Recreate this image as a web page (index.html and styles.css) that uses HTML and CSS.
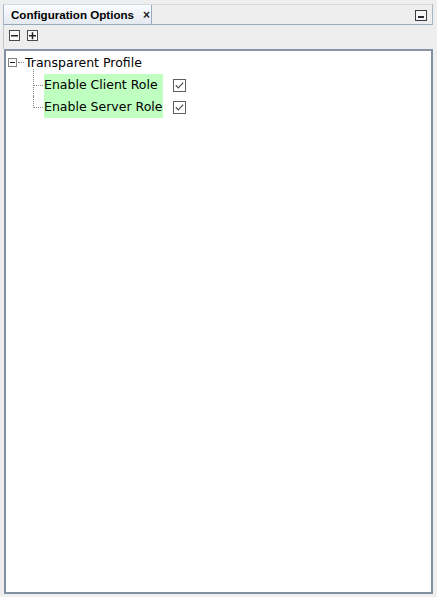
FILE: index.html
```html
<!DOCTYPE html>
<html>
<head>
<meta charset="utf-8">
<link rel="stylesheet" href="styles.css">
</head>
<body>
<div class="panel">
  <div class="header">
    <div class="tab">
      <span class="tab-title">Configuration Options</span>
      <span class="tab-close">×</span>
    </div>
    <span class="minimize"><span class="minimize-bar"></span></span>
  </div>
  <div class="toolbar">
    <span class="tool-btn">
      <svg width="11" height="11" viewBox="0 0 11 11"><rect x="0.5" y="0.5" width="10" height="10" fill="#fafafa" stroke="#4a4a4a"/><rect x="2" y="5" width="7" height="1.5" fill="#222"/></svg>
    </span>
    <span class="tool-btn">
      <svg width="11" height="11" viewBox="0 0 11 11"><rect x="0.5" y="0.5" width="10" height="10" fill="#fafafa" stroke="#4a4a4a"/><rect x="2" y="5" width="7" height="1.5" fill="#222"/><rect x="4.75" y="2.25" width="1.5" height="7" fill="#222"/></svg>
    </span>
  </div>
  <div class="content">
    <div class="root-row">
      <span class="expander">
        <svg width="9" height="9" viewBox="0 0 9 9"><rect x="0.5" y="0.5" width="8" height="8" fill="#fff" stroke="#808080"/><rect x="2" y="4" width="5" height="1" fill="#222"/></svg>
      </span>
      <span class="root-link"></span>
      <span class="root-label">Transparent Profile</span>
    </div>
    <div class="children">
      <div class="child">
        <span class="conn"></span>
        <span class="label">Enable Client Role</span>
        <span class="check">
          <svg width="13" height="13" viewBox="0 0 13 13"><rect x="0.5" y="0.5" width="12" height="12" fill="#fff" stroke="#5e5e5e"/><path d="M2.8 6.3 L5.3 8.9 L10.2 3.6" fill="none" stroke="#555" stroke-width="1.3"/></svg>
        </span>
      </div>
      <div class="child">
        <span class="conn"></span>
        <span class="label">Enable Server Role</span>
        <span class="check">
          <svg width="13" height="13" viewBox="0 0 13 13"><rect x="0.5" y="0.5" width="12" height="12" fill="#fff" stroke="#5e5e5e"/><path d="M2.8 6.3 L5.3 8.9 L10.2 3.6" fill="none" stroke="#555" stroke-width="1.3"/></svg>
        </span>
      </div>
    </div>
  </div>
</div>
</body>
</html>
```
FILE: styles.css
```css
html, body {
  margin: 0;
  padding: 0;
  background: #eeeeee;
}
body {
  width: 437px;
  height: 597px;
  overflow: hidden;
}
.panel {
  margin: 4px 0 0 3px;
  width: 430px;
  height: 590px;
  display: flex;
  flex-direction: column;
}
.header {
  height: 19px;
  display: flex;
  justify-content: space-between;
  align-items: stretch;
  border-top: 1px solid #d4dae2;
  border-right: 1px solid #a9b4c2;
  border-left: 1px solid #a9b4c2;
  border-bottom: 1px solid #98aac0;
  background: #eeeeee;
  box-sizing: content-box;
}
.tab {
  width: 148px;
  display: flex;
  align-items: center;
  border-right: 1px solid #9aaac0;
  background: linear-gradient(#fbfcfe, #e4e9f1);
  font-family: "Liberation Sans", Arial, sans-serif;
  font-weight: bold;
  font-size: 11.6px;
  color: #000;
  padding-left: 7px;
  box-sizing: border-box;
}
.tab-close {
  margin-left: 9px;
  font-size: 12px;
  color: #222;
}
.minimize {
  width: 8px;
  height: 7px;
  border: 1px solid #3a3a44;
  background: #f4f4f4;
  margin: 5px 5px 0 0;
  display: flex;
  align-items: flex-end;
  justify-content: center;
  padding: 1px;
}
.minimize-bar {
  width: 6px;
  height: 2px;
  background: #2a2a33;
  margin-bottom: 1px;
}
.toolbar {
  height: 24px;
  display: flex;
  align-items: flex-start;
  gap: 7px;
  padding: 5px 0 0 5px;
  box-sizing: border-box;
  border-left: 1px solid #c0c8d2;
}
.tool-btn {
  display: block;
  width: 11px;
  height: 11px;
}
.tool-btn svg {
  display: block;
}
.content {
  flex: 1;
  margin-left: 1px;
  border: 2px solid #8290a2;
  border-top-color: #8a96a6;
  background: #ffffff;
  font-family: "DejaVu Sans", sans-serif;
  font-size: 12.5px;
  color: #000;
}
.root-row {
  height: 22px;
  display: flex;
  align-items: center;
  padding-left: 2px;
}
.expander {
  width: 9px;
  height: 9px;
}
.expander svg {
  display: block;
}
.root-link {
  width: 6px;
  margin: 0 1px 0 1px;
  border-top: 1px dotted #888;
  height: 0;
}
.children {
  margin-left: 27px;
  padding-top: 1px;
}
.child {
  height: 22px;
  display: flex;
  align-items: center;
}
.conn {
  width: 11px;
  align-self: stretch;
  position: relative;
}
.conn::before {
  content: "";
  position: absolute;
  left: 0;
  top: 0;
  bottom: 0;
  border-left: 1px dotted #888;
}
.child:first-child .conn::before {
  top: -5px;
}
.child:last-child .conn::before {
  bottom: 10px;
}
.conn::after {
  content: "";
  position: absolute;
  left: 0;
  right: 1px;
  top: 11px;
  border-top: 1px dotted #888;
}
.label {
  width: 119px;
  height: 22px;
  line-height: 22px;
  box-sizing: border-box;
  background: #bfffbf;
  white-space: nowrap;
}
.check {
  width: 13px;
  height: 13px;
  margin-left: 10px;
}
.check svg {
  display: block;
}
```
